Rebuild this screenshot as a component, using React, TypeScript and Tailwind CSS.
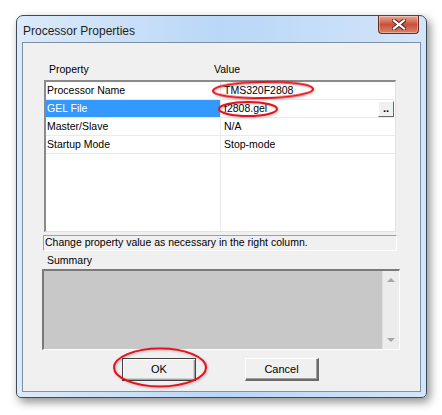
import React from 'react';

const rows = [
  { name: 'Processor Name', value: 'TMS320F2808' },
  { name: 'GEL File', value: 'f2808.gel', selected: true },
  { name: 'Master/Slave', value: 'N/A' },
  { name: 'Startup Mode', value: 'Stop-mode' },
];

const Btn = ({ label, isDefault }: { label: string; isDefault?: boolean }) => (
  <div
    className={`w-[74px] h-[23px] flex items-center justify-center bg-[#f0f0f0] text-[11px] text-black ${
      isDefault
        ? 'border border-[#404040] shadow-[inset_1px_1px_0_#fff,inset_-1px_-1px_0_#a0a0a0,inset_-2px_-2px_0_#d0d0d0]'
        : 'border-t border-l border-[#fff] border-r-2 border-b-2 border-r-[#6a6a6a] border-b-[#6a6a6a] shadow-[inset_-1px_-1px_0_#a0a0a0]'
    }`}
  >
    {label}
  </div>
);

const App = () => {
  return (
    <div className="relative w-[442px] h-[415px] bg-white overflow-hidden font-['Liberation_Sans',Arial,sans-serif]">
      {/* window frame */}
      <div className="ml-[16px] mt-[15px] w-[411px] h-[383px] flex flex-col rounded-t-[7px] rounded-b-[5px] border border-[#3e4a58] bg-gradient-to-r from-[#dceaf9] via-[#b9d7f7] to-[#d3e5f9] shadow-[3px_4px_10px_rgba(0,0,0,0.45)]">
        {/* title bar */}
        <div className="h-[26px] flex items-start">
          <span className="pl-[6px] pt-[6px] text-[12px] text-[#1e1e1e]">Processor Properties</span>
          <div className="ml-auto mr-[7px] w-[41px] h-[18px] rounded-b-[4px] border border-t-0 border-[#6b2b22] bg-gradient-to-b from-[#e9a595] via-[#c8503a] to-[#d9826c] flex items-center justify-center shadow-[inset_0_0_0_1px_rgba(255,255,255,0.35)]">
            <svg width="14" height="11" viewBox="0 0 14 11">
              <path d="M2 1.5 L12 9.5 M12 1.5 L2 9.5" stroke="#5a2a22" strokeWidth="4.2" strokeLinecap="square" />
              <path d="M2 1.5 L12 9.5 M12 1.5 L2 9.5" stroke="#ffffff" strokeWidth="2.2" strokeLinecap="square" />
            </svg>
          </div>
        </div>

        {/* client area */}
        <div className="mx-[5px] mb-[5px] flex-1 border border-[#7d90a6] bg-[#f0f0f0] flex flex-col text-[10.5px] text-black">
          {/* column headers */}
          <div className="mt-[19px] h-[16px] flex items-center">
            <span className="ml-[26px] w-[165px]">Property</span>
            <span>Value</span>
          </div>

          {/* property grid */}
          <div className="mt-[2px] ml-[21px] w-[352px] h-[152px] flex flex-col bg-white border-t-2 border-l-2 border-t-[#8a8a8a] border-l-[#8a8a8a] border-r border-b border-r-[#e3e3e3] border-b-[#e3e3e3]">
            {rows.map((r) => (
              <div key={r.name} className="h-[18px] flex border-b border-[#eaeaea]">
                <div
                  className={`w-[175px] pl-[1px] flex items-center border-r border-[#eaeaea] ${
                    r.selected ? 'bg-[#3399ff] text-white' : ''
                  }`}
                >
                  {r.name}
                </div>
                <div className="flex-1 pl-[3px] flex items-center">
                  <span className="flex-1">{r.value}</span>
                  {r.selected && (
                    <div className="w-[16px] h-[16px] mr-[1px] bg-[#f0f0f0] border-t border-l border-white border-r border-b border-r-[#6a6a6a] border-b-[#6a6a6a] flex items-end justify-center pb-[2px] text-[11px] font-bold leading-none">
                      ..
                    </div>
                  )}
                </div>
              </div>
            ))}
            <div className="flex-1 flex">
              <div className="w-[175px] border-r border-[#eaeaea]" />
            </div>
          </div>

          {/* status line */}
          <div className="mt-[3px] ml-[20px] w-[354px] h-[16px] flex items-center pl-[1px] border border-t-[#a0a0a0] border-l-[#a0a0a0] border-r-white border-b-white">
            Change property value as necessary in the right column.
          </div>

          {/* summary */}
          <div className="mt-[3px] ml-[24px] h-[14px] flex items-center">Summary</div>
          <div className="mt-[1px] ml-[19px] w-[358px] h-[81px] flex bg-[#c8c8c8] border-t-2 border-l-2 border-t-[#7a7a7a] border-l-[#7a7a7a] border-r border-b border-r-white border-b-white">
            <div className="flex-1" />
            <div className="w-[17px] bg-[#ececec] border-l border-[#e0e0e0] flex flex-col items-center justify-between py-[6px]">
              <svg width="8" height="5" viewBox="0 0 8 5">
                <path d="M0 5 L4 1 L8 5 Z" fill="#a6a6a6" />
              </svg>
              <svg width="8" height="5" viewBox="0 0 8 5">
                <path d="M0 0 L8 0 L4 4 Z" fill="#a6a6a6" />
              </svg>
            </div>
          </div>

          {/* buttons */}
          <div className="mt-[8px] flex">
            <div className="ml-[99px]">
              <Btn label="OK" isDefault />
            </div>
            <div className="ml-[49px]">
              <Btn label="Cancel" />
            </div>
          </div>
        </div>
      </div>

      {/* red annotation ellipses */}
      <svg className="absolute inset-0 pointer-events-none" width="442" height="415" viewBox="0 0 442 415">
        <g fill="none" stroke="#e8101a" strokeWidth="2" style={{ filter: 'drop-shadow(1px 1px 1px rgba(0,0,0,0.25))' }}>
          <ellipse cx="263" cy="90" rx="50" ry="8" transform="rotate(-1 263 90)" />
          <ellipse cx="248" cy="109" rx="29" ry="7" />
          <ellipse cx="160" cy="367.5" rx="46" ry="19" />
        </g>
      </svg>
    </div>
  );
};

export default App;
